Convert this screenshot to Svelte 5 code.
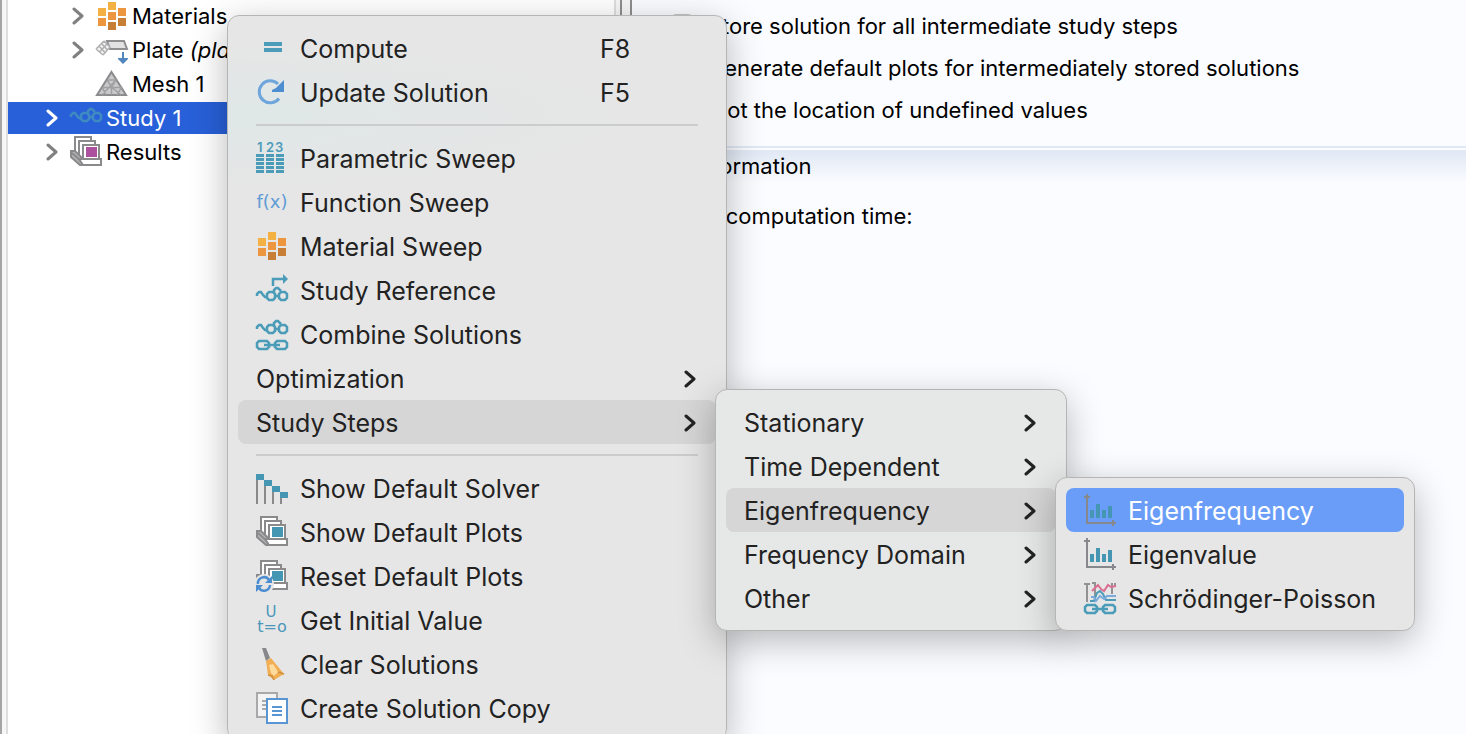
<script>
  const tree = [
    { label: 'Materials', icon: 'blocks', level: 2, expandable: true },
    { label: 'Plate', note: '(plate)', icon: 'plate', level: 2, expandable: true },
    { label: 'Mesh 1', icon: 'mesh', level: 2 },
    { label: 'Study 1', icon: 'study', level: 1, expandable: true, selected: true },
    { label: 'Results', icon: 'results', level: 1, expandable: true }
  ];

  const options = [
    'Store solution for all intermediate study steps',
    'Generate default plots for intermediately stored solutions',
    'Plot the location of undefined values'
  ];

  const eigenMenu = [
    { label: 'Eigenfrequency', icon: 'eigen', active: true },
    { label: 'Eigenvalue', icon: 'eigen' },
    { label: 'Schrödinger-Poisson', icon: 'poisson' }
  ];

  const stepsMenu = [
    { label: 'Stationary', arrow: true },
    { label: 'Time Dependent', arrow: true },
    { label: 'Eigenfrequency', arrow: true, children: eigenMenu, kind: 'leaf' },
    { label: 'Frequency Domain', arrow: true },
    { label: 'Other', arrow: true }
  ];

  const studyMenu = [
    { label: 'Compute', icon: 'compute', key: 'F8' },
    { label: 'Update Solution', icon: 'update', key: 'F5' },
    { separator: true },
    { label: 'Parametric Sweep', icon: 'parametric' },
    { label: 'Function Sweep', icon: 'fx' },
    { label: 'Material Sweep', icon: 'blocks' },
    { label: 'Study Reference', icon: 'reference' },
    { label: 'Combine Solutions', icon: 'combine' },
    { label: 'Optimization', arrow: true },
    { label: 'Study Steps', arrow: true, children: stepsMenu, kind: 'steps' },
    { separator: true },
    { label: 'Show Default Solver', icon: 'solver' },
    { label: 'Show Default Plots', icon: 'plots' },
    { label: 'Reset Default Plots', icon: 'reset' },
    { label: 'Get Initial Value', icon: 'initial' },
    { label: 'Clear Solutions', icon: 'broom' },
    { label: 'Create Solution Copy', icon: 'copy' }
  ];
</script>

{#snippet glasses()}
  <g fill="none" stroke="#4a9cb8" stroke-width="2.5">
    <path d="M1 11V9L3 7H5L7 10L9 12H11" />
    <path d="M13 7H17L19 9V13L17 15H13L11 13V9Z" />
    <path d="M25 7H29L31 9V13L29 15H25L23 13V9Z" />
    <path d="M18 8V5L20 3H22L25 6M19 11H23" />
  </g>
{/snippet}

{#snippet chain()}
  <g fill="none" stroke="#4a9cb8" stroke-width="2.5">
    <path d="M13 26V25L11 23H3L1 25V29L3 31H11L13 29V28" />
    <path d="M19 26V25L21 23H29L31 25V29L29 31H21L19 29V28" />
    <path d="M8 27H24" />
  </g>
{/snippet}

{#snippet stack(fill)}
  <g fill="#fff" stroke="#8a8a8d" stroke-width="2">
    <path d="M5 18V1H21V5" />
    <path d="M9 20V5H25V9" />
    <path d="M1 15L5 15L13 23V29H10L1 21Z" fill="#b4b4b6" />
    <path d="M2 17L12 26" />
    <path d="M13 23V9H29V23Z" />
    <path d="M9 23H31V29H13Z" />
  </g>
  <path d="M16 11H27V21H16Z" {fill} />
{/snippet}

{#snippet icon(name)}
  <svg class="icon" viewBox="0 0 32 32" aria-hidden="true">
    {#if name === 'blocks'}
      <path fill="#f3b144" d="M12 2h8v8h-8zM2 8h8v8H2z" />
      <path fill="#ec9640" d="M12 12h8v8h-8zM22 8h8v8h-8zM2 18h8v8H2z" />
      <path fill="#c77f36" d="M12 22h8v8h-8zM22 18h8v8h-8z" />
    {:else if name === 'plate'}
      <path d="M11 7H28L31 15H14Z" fill="#e2e2e2" stroke="#8f8f91" stroke-width="2" />
      <path d="M8 7L14 13L7 21L0 15Z" fill="#f2f2f2" />
      <path d="M8 7L14 13M5.500 9.500L11.500 16M3 12L9 18.500M0 15L7 21M8 7L0 15M11 10L3.500 18M14 13L7 21" stroke="#b0b0b2" stroke-width="1.500" />
      <path d="M26 18h2v6h4v1l-5 5l-5-5v-1h4z" fill="#5286be" />
    {:else if name === 'mesh'}
      <path d="M15.500 4L30 27H1Z" fill="#c9c9ca" stroke="#8b8b8d" stroke-width="2" />
      <path d="M11 12H20L6 27M20 12L15.500 19M11 12L15.500 19L25 27M6 19.500H25.500L21 27M6 19.500L10.500 27M15.500 19V27" fill="none" stroke="#a0a0a2" stroke-width="1.500" />
    {:else if name === 'study'}
      <g transform="translate(0 4)" opacity="0.7">{@render glasses()}</g>
    {:else if name === 'results'}
      {@render stack('#ab519f')}
    {:else if name === 'compute'}
      <path d="M8 10h18v4H8zM8 16h18v4H8z" fill="#4a9cb8" />
    {:else if name === 'update'}
      <path d="M22 8A11 11 0 1 0 23 22.500" fill="none" stroke="#6ea6dc" stroke-width="3" />
      <path d="M28 4V16H16V14L20 12Z" fill="#4d8ed0" />
    {:else if name === 'parametric'}
      <g fill="#4a9cb8">
        <g font-size="13" font-weight="600" font-family="Inter, sans-serif">
          <text x="1" y="10">1</text>
          <text x="10" y="10">2</text>
          <text x="19" y="10">3</text>
        </g>
        {#each [12, 16, 20, 24, 28] as y}
          <path d="M0 {y}h8v3H0zM10 {y}h8v3h-8zM20 {y}h8v3h-8z" />
        {/each}
      </g>
    {:else if name === 'fx'}
      <text x="16" y="22" text-anchor="middle" font-size="18" font-family="DejaVu Sans, sans-serif" fill="#609bd6">f(x)</text>
    {:else if name === 'reference'}
      <g transform="translate(0 11)">{@render glasses()}</g>
      <path d="M17 12V5H28" fill="none" stroke="#4a9cb8" stroke-width="2.5" />
      <path d="M27 0L32 5L27 10Z" fill="#4a9cb8" />
    {:else if name === 'combine'}
      {@render glasses()}
      {@render chain()}
    {:else if name === 'solver'}
      <path d="M0 8h2v24H0zM8 14h2v18H8zM16 20h2v12h-2zM24 26h2v6h-2z" fill="#8a8a8d" />
      <path d="M0 2h8v6H0zM8 8h8v6H8zM16 14h8v6h-8zM24 20h8v6h-8z" fill="#4496b2" />
    {:else if name === 'plots'}
      {@render stack('#4496b2')}
    {:else if name === 'reset'}
      {@render stack('#4496b2')}
      <circle cx="8" cy="24" r="10" fill="#e6e6e6" />
      <path d="M13 20A6 6 0 0 0 2 24M3 28A6 6 0 0 0 14 25" fill="none" stroke="#4d8ed0" stroke-width="2.500" />
      <path d="M16 16V23H9ZM0 32V25H7Z" fill="#4d8ed0" />
    {:else if name === 'initial'}
      <g fill="#4a97ba" font-family="DejaVu Sans, sans-serif" text-anchor="middle">
        <text x="15" y="13" font-size="15">U</text>
        <text x="16" y="28" font-size="16">t=o</text>
      </g>
    {:else if name === 'broom'}
      <path d="M6 0H10L14 10L10 13Z" fill="#88888a" />
      <path d="M10 13L15 10L28 26L23 29L18 32L12 27Z" fill="#f2ae55" />
      <path d="M13 17L17 16L22 24L18 28L15 25Z" fill="#ffdc9e" />
      <path d="M12 27L16 28L18 32M22 24L28 26" fill="none" stroke="#cf9140" stroke-width="1.500" />
    {:else if name === 'copy'}
      <path d="M1 1H21V25H1Z" fill="#f3f3f3" stroke="#a9a9ab" stroke-width="2" />
      <path d="M6 9h5M6 13h5M6 17h5" stroke="#a9a9ab" stroke-width="2" />
      <path d="M11 7H31V31H11Z" fill="#fff" stroke="#5796d2" stroke-width="2" />
      <path d="M16 15h10M16 19h10M16 23h10" stroke="#5796d2" stroke-width="2" />
    {:else if name === 'eigen'}
      <path d="M2 0h2v2h2v2H4v24h24v-2h2v2h2v2h-2v2h-2v-2H2V4H0V2h2z" fill="#87888c" />
      <path d="M6 16h4v8H6zM12 10h4v14h-4zM18 16h4v8h-4zM24 12h4v12h-4z" fill="#4496b2" />
    {:else if name === 'poisson'}
      <path d="M3 20V1M0 2H6M8 1H11V19M28 1V12M31 1V5" fill="none" stroke="#929295" stroke-width="2" />
      <path d="M8 9L11 6L14 3L17 7L20 9L24 3L27 5L32 4" fill="none" stroke="#dc6e91" stroke-width="2" />
      <path d="M6 19H10L13 11L16 9L19 12L22 18H32" fill="none" stroke="#4a9cb8" stroke-width="2" />
      <path d="M7 15H10L12 19L16 14L20 17L23 14H32" fill="none" stroke="#7aa9dc" stroke-width="2" />
      {@render chain()}
    {/if}
  </svg>
{/snippet}

{#snippet chevron()}
  <svg class="chevron" viewBox="0 0 12 20" aria-hidden="true"><path d="M2 3L10 10L2 17" /></svg>
{/snippet}

{#snippet menu(items, kind)}
  <ul class="menu {kind}" role="menu">
    {#each items as item}
      {#if item.separator}
        <li class="separator" role="separator"></li>
      {:else}
        <li class="entry" role="none">
          <button class="item" class:open={item.children} class:active={item.active} role="menuitem">
            {#if item.icon}{@render icon(item.icon)}{/if}
            <span class="label">{item.label}</span>
            {#if item.key}<kbd>{item.key}</kbd>{/if}
            {#if item.arrow}{@render chevron()}{/if}
          </button>
          {#if item.children}{@render menu(item.children, item.kind)}{/if}
        </li>
      {/if}
    {/each}
  </ul>
{/snippet}

<div class="window">
  <nav class="tree" aria-label="Model Builder">
    {#each tree as node}
      <button class="node level-{node.level}" class:selected={node.selected}>
        <span class="toggle">{#if node.expandable}{@render chevron()}{/if}</span>
        {@render icon(node.icon)}
        <span>{node.label} {#if node.note}<em>{node.note}</em>{/if}</span>
      </button>
    {/each}
  </nav>
  <div class="splitter"></div>
  <main class="settings">
    <div class="options">
      {#each options as option}
        <label><input type="checkbox" />{option}</label>
      {/each}
    </div>
    <section>
      <h2>Information</h2>
      <p>Last computation time:</p>
    </section>
  </main>
  {@render menu(studyMenu, 'root')}
</div>

<style>
  :global(body) {
    margin: 0;
  }
  .window {
    position: relative;
    display: flex;
    box-sizing: border-box;
    height: 100vh;
    overflow: hidden;
    border-left: 2px solid #a5a5a5;
    background: #f6f6f6;
    color: #000;
    font-family: Inter, sans-serif;
    font-size: 22px;
    line-height: 32px;
  }
  button {
    box-sizing: border-box;
    margin: 0;
    padding: 0;
    border: 0;
    background: none;
    color: inherit;
    font: inherit;
    text-align: left;
  }
  .icon {
    flex: none;
    width: 32px;
    height: 32px;
    overflow: visible;
  }
  .chevron {
    flex: none;
    width: 12px;
    height: 20px;
    fill: none;
    stroke: currentColor;
    stroke-width: 3;
    stroke-linecap: round;
    stroke-linejoin: round;
  }
  .tree {
    display: flex;
    flex: 0 0 calc(42% - 5px);
    box-sizing: border-box;
    flex-direction: column;
    gap: 2px;
    margin-left: 4px;
    border: solid #dedede;
    border-width: 0 2px;
    background: #fff;
  }
  .node {
    display: flex;
    gap: 4px;
    height: 32px;
    padding-left: 38px;
    white-space: nowrap;
  }
  .node.level-2 {
    padding-left: 64px;
  }
  .node.selected {
    background: #2860d9;
    color: #fff;
  }
  .toggle {
    display: flex;
    align-items: center;
    width: 20px;
    color: #808080;
  }
  .selected .toggle {
    color: #fff;
  }
  .splitter {
    box-sizing: border-box;
    flex: 0 0 12px;
    margin-left: 4px;
    border: solid #8e8e8e;
    border-width: 0 2px;
  }
  .settings {
    flex: 1;
    background: #fbfcff;
  }
  .options {
    display: flex;
    flex-direction: column;
    gap: 10px;
    padding: 10px 0 20px 38px;
    border-bottom: 2px solid #e0e8f3;
  }
  label {
    display: flex;
    gap: 14px;
    align-items: center;
  }
  input {
    width: 24px;
    height: 24px;
    margin: 0;
    border: 2px solid #c4c4c6;
    border-radius: 6px;
    background: #e6e6e8;
    appearance: none;
  }
  section {
    margin-top: 2px;
    background: linear-gradient(#e0e8f4, #fbfcff 34px);
  }
  h2,
  p {
    margin: 0;
    font: inherit;
  }
  h2 {
    padding-left: 61px;
  }
  p {
    padding: 18px 0 0 44px;
  }
  .menu {
    position: absolute;
    z-index: 1;
    box-sizing: border-box;
    margin: 0;
    padding: 10px;
    border: 1px solid #b5b5b5;
    border-radius: 12px;
    background: #e6e6e6;
    box-shadow: 0 10px 36px rgb(0 0 0 / 28%);
    color: #222;
    font-size: 25px;
    line-height: 44px;
    list-style: none;
  }
  .root {
    top: 15px;
    left: 225px;
    width: 500px;
    background: radial-gradient(ellipse 400px 70px at 0 100px, #dfe7e7, #e6e6e6);
  }
  .steps,
  .leaf {
    top: -11px;
    left: calc(100% - 1px);
  }
  .steps {
    width: 352px;
    background: #e6e8e7;
  }
  .leaf {
    width: 360px;
  }
  .entry {
    position: relative;
  }
  .item {
    display: flex;
    gap: 12px;
    align-items: center;
    width: 100%;
    height: 44px;
    padding: 0 20px 0 18px;
    border-radius: 8px;
    white-space: nowrap;
  }
  .item.open {
    background: #d6d6d7;
  }
  .item.active {
    background: #6a9df8;
    color: #fff;
  }
  .label {
    flex: 1;
  }
  .label,
  kbd,
  .item .chevron {
    padding-top: 2px;
  }
  kbd {
    width: 96px;
    font: inherit;
  }
  .separator {
    height: 2px;
    margin: 10px 18px;
    background: #cbcccc;
  }
</style>
